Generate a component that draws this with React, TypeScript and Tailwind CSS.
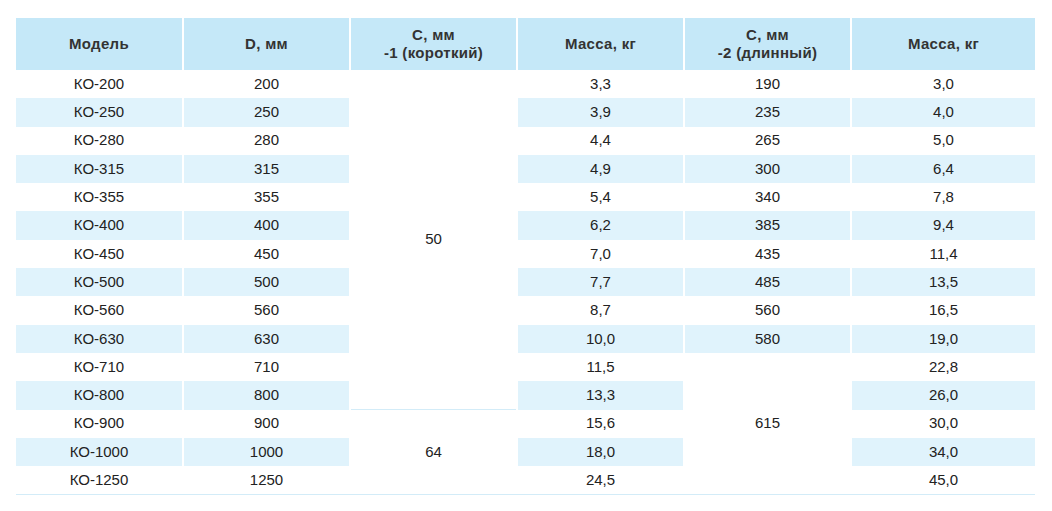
import React from "react";

const models = ["200","250","280","315","355","400","450","500","560","630","710","800","900","1000","1250"];
const mass1 = ["3,3","3,9","4,4","4,9","5,4","6,2","7,0","7,7","8,7","10,0","11,5","13,3","15,6","18,0","24,5"];
const c2 = ["190","235","265","300","340","385","435","485","560","580"];
const mass2 = ["3,0","4,0","5,0","6,4","7,8","9,4","11,4","13,5","16,5","19,0","22,8","26,0","30,0","34,0","45,0"];

function Cell({ children, striped }: { children?: React.ReactNode; striped: boolean }) {
  return (
    <div className={`flex items-center justify-center ${striped ? "bg-[#e0f3fc]" : "bg-white"}`}>
      {children}
    </div>
  );
}

function Head({ children }: { children: React.ReactNode }) {
  return (
    <div className="flex items-center justify-center bg-[#c5e8f8] text-center font-bold text-[#333333] leading-[18px] tracking-[0.3px]">
      {children}
    </div>
  );
}

export default function App() {
  const cells: React.ReactNode[] = [];
  models.forEach((m, i) => {
    const s = i % 2 === 1;
    cells.push(<Cell key={`a${i}`} striped={s}>КО-{m}</Cell>);
    cells.push(<Cell key={`b${i}`} striped={s}>{m}</Cell>);
    if (i === 0) {
      cells.push(
        <div key="c50" className="row-span-12 flex items-center justify-center bg-white border-b border-[#d3ecf8]">50</div>
      );
    }
    if (i === 12) {
      cells.push(
        <div key="c64" className="row-span-3 flex items-center justify-center bg-white">64</div>
      );
    }
    cells.push(<Cell key={`d${i}`} striped={s}>{mass1[i]}</Cell>);
    if (i < 10) {
      cells.push(<Cell key={`e${i}`} striped={s}>{c2[i]}</Cell>);
    }
    if (i === 10) {
      cells.push(
        <div key="e615" className="row-span-5 flex items-center justify-center bg-white">615</div>
      );
    }
    cells.push(<Cell key={`f${i}`} striped={s}>{mass2[i]}</Cell>);
  });

  return (
    <div className="w-[1052px] h-[511px] bg-white pt-[18px] pl-[16px] font-['Liberation_Sans',Arial,sans-serif] text-[15px] text-[#222222]">
      <div className="grid w-[1019px] grid-cols-[166px_165px_165px_165px_165px_183px] grid-rows-[52px_repeat(15,28.3px)] gap-x-[2px] border-b border-[#d3ecf8]">
        <Head>Модель</Head>
        <Head>D, мм</Head>
        <Head>
          <span>
            С, мм
            <br />
            -1 (короткий)
          </span>
        </Head>
        <Head>Масса, кг</Head>
        <Head>
          <span>
            С, мм
            <br />
            -2 (длинный)
          </span>
        </Head>
        <Head>Масса, кг</Head>
        {cells}
      </div>
    </div>
  );
}
